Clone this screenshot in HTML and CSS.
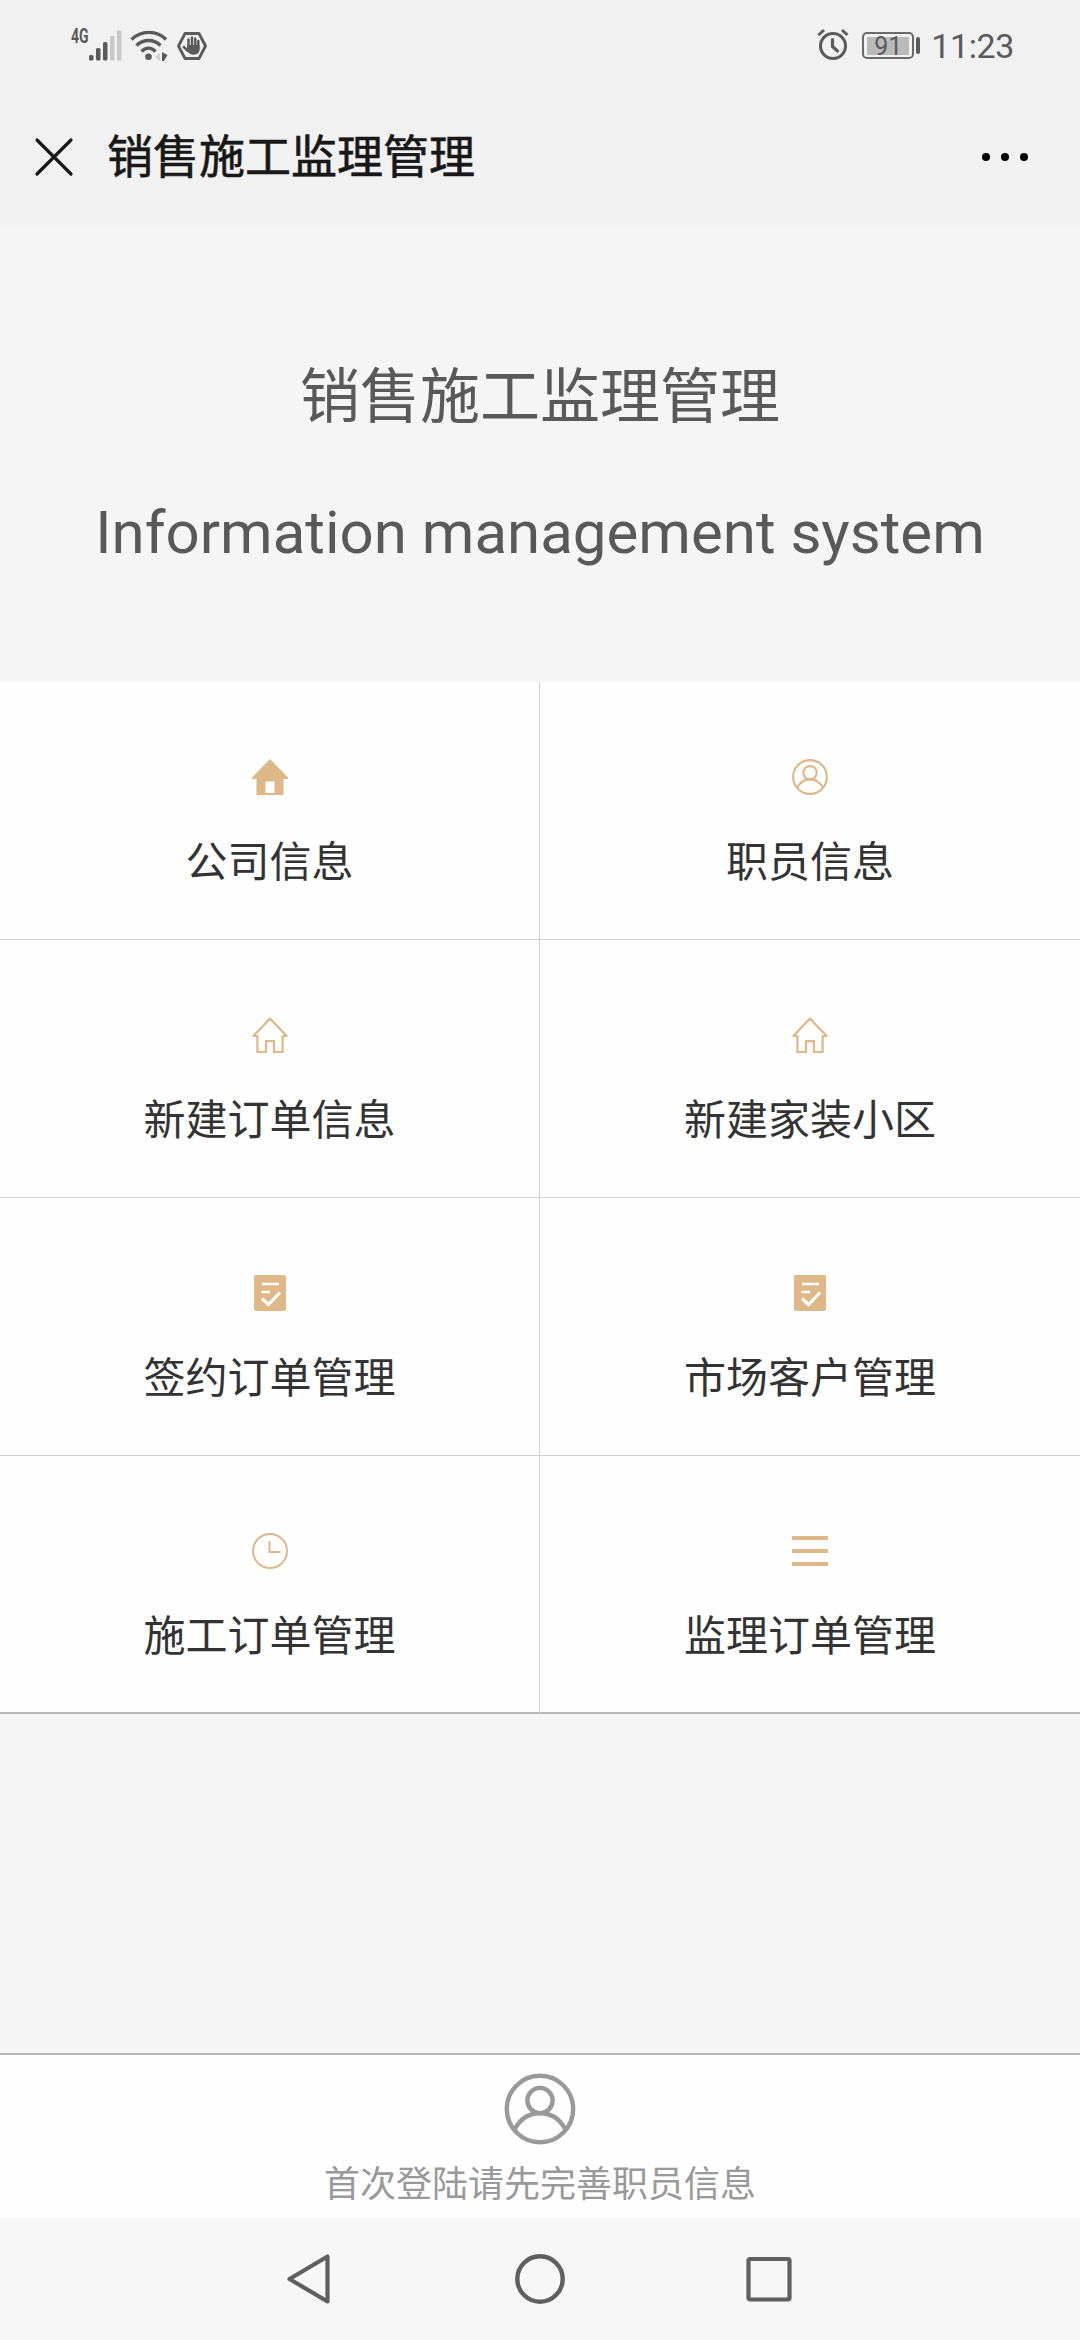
FILE: index.html
```
<!DOCTYPE html>
<html lang="zh-CN">
<head>
    <meta charset="UTF-8">
    <meta name="viewport" content="width=device-width, initial-scale=1.0">
    <title>销售施工监理管理</title>
    <link rel="stylesheet" href="styles.css">
</head>
<body>
    <svg class="sprite" aria-hidden="true">
        <symbol id="icon-user" viewBox="0 0 72 72">
            <g fill="none" stroke="currentColor" stroke-width="4.4">
                <circle cx="36" cy="36" r="33.2"/>
                <circle cx="36" cy="27.5" r="12.6"/>
                <path d="M10.5 56.5C16 46 25 40.2 36 40.2S56 46 61.5 56.5"/>
            </g>
        </symbol>
        <symbol id="icon-house" viewBox="0 0 36 36">
            <path d="M18 1.4L34.6 19H30.6V35H22V24.2H14V35H5.4V19H1.4Z" fill="none" stroke="currentColor" stroke-width="2.2" stroke-linejoin="round"/>
        </symbol>
        <symbol id="icon-form" viewBox="0 0 36 36">
            <rect x="2" y="0" width="32" height="36" rx="2" fill="currentColor"/>
            <path d="M10 9H27M9.500 17H18" fill="none" stroke="#fff" stroke-width="2.400"/>
            <path d="M10 23.500L16.500 29.500L28 17.500" fill="none" stroke="#fff" stroke-width="3.2"/>
        </symbol>
    </svg>

    <div class="status">
        <div class="status-left">
            <span class="net">4G</span>
            <svg class="signal" width="34" height="32" viewBox="0 0 34 32">
                <g fill="#5a5a5a">
                    <rect x="0" y="25" width="4.500" height="5.500" rx="1.500"/>
                    <rect x="7" y="18" width="4.500" height="12.500" rx="1.500"/>
                    <rect x="14" y="12" width="4.500" height="18.500" rx="1.500"/>
                </g>
                <g fill="#c8c8c8">
                    <rect x="21" y="6" width="4.500" height="24.500" rx="1"/>
                    <rect x="28" y="0.500" width="4.500" height="30" rx="1"/>
                </g>
            </svg>
            <svg class="wifi" width="38" height="32" viewBox="0 0 38 32">
                <g fill="none" stroke="#5a5a5a" stroke-width="3.400">
                    <path d="M1.500 9.500C11 0 27 0 36 9.500"/>
                    <path d="M6.500 15.500C13 8.800 24 8.800 30.500 15.500"/>
                    <path d="M11.500 21.500C15.500 17 21.500 17 25.500 21.500"/>
                </g>
                <circle cx="18.500" cy="26.800" r="3.300" fill="#5a5a5a"/>
                <path d="M30 23V31L25 27Z" fill="#d0d0d0"/>
                <path d="M32 22L37.500 25L34 31H32Z" fill="#5a5a5a"/>
            </svg>
            <svg class="hand" width="32" height="30" viewBox="0 0 32 30">
                <path d="M9 2.500H23L29.500 15L23 27.500H9L2.500 15Z" fill="none" stroke="#5a5a5a" stroke-width="2.800" stroke-linejoin="round"/>
                <g fill="none" stroke="#5a5a5a" stroke-width="2.500" stroke-linecap="round">
                    <path d="M12.500 17V8.500M16 16V6.500M19.300 16V7.500M22.300 18V10M7.800 16L11.500 19.500"/>
                </g>
                <path d="M11.300 14H23.500V19C23.500 25 13.500 25 11 20Z" fill="#5a5a5a"/>
            </svg>
        </div>
        <div class="status-right">
            <svg class="alarm" width="32" height="32" viewBox="0 0 32 32">
                <g fill="none" stroke="#5a5a5a" stroke-width="3">
                    <circle cx="16" cy="18" r="12.500"/>
                    <path d="M15.500 11.500V18.500L20.500 23" stroke-width="3.200" stroke-linejoin="round" stroke-linecap="round"/>
                    <path d="M1.500 7L7 2M25 2L30.500 7"/>
                </g>
            </svg>
            <div class="battery"><span class="battery-level">91</span></div>
            <span class="time">11:23</span>
        </div>
    </div>

    <div class="navbar">
        <svg class="close" width="40" height="40" viewBox="0 0 40 40">
            <path d="M3 3L37 37M37 3L3 37" stroke="#181818" stroke-width="3.200" stroke-linecap="round"/>
        </svg>
        <div class="navbar-title">销售施工监理管理</div>
        <div class="more"><i></i><i></i><i></i></div>
    </div>

    <div class="hero">
        <h1>销售施工监理管理</h1>
        <h2>Information management system</h2>
    </div>

    <div class="menu">
        <a class="item">
            <svg class="icon" viewBox="0 0 36 36">
                <path d="M18 0L36 18.500V20H31.500V36H4.500V20H0V18.500ZM13.500 22.500V34H22.500V22.500Z" fill="currentColor" fill-rule="evenodd"/>
            </svg>
            <span>公司信息</span>
        </a>
        <a class="item">
            <svg class="icon" viewBox="0 0 36 36">
                <g fill="none" stroke="currentColor" stroke-width="2.1">
                    <circle cx="18" cy="18" r="16.900"/>
                    <circle cx="18" cy="13.700" r="6.700"/>
                    <path d="M5 28.800C7.800 23.500 12 20.400 18 20.400S28.200 23.500 31 28.800"/>
                </g>
            </svg>
            <span>职员信息</span>
        </a>
        <a class="item">
            <svg class="icon"><use href="#icon-house"/></svg>
            <span>新建订单信息</span>
        </a>
        <a class="item">
            <svg class="icon"><use href="#icon-house"/></svg>
            <span>新建家装小区</span>
        </a>
        <a class="item">
            <svg class="icon"><use href="#icon-form"/></svg>
            <span>签约订单管理</span>
        </a>
        <a class="item">
            <svg class="icon"><use href="#icon-form"/></svg>
            <span>市场客户管理</span>
        </a>
        <a class="item">
            <svg class="icon" viewBox="0 0 36 36">
                <circle cx="18" cy="18" r="17" fill="none" stroke="currentColor" stroke-width="2"/>
                <path d="M17.500 8V19H28.500" fill="none" stroke="currentColor" stroke-width="2"/>
            </svg>
            <span>施工订单管理</span>
        </a>
        <a class="item">
            <svg class="icon" viewBox="0 0 36 36">
                <path d="M0 5H36M0 18H36M0 31H36" stroke="currentColor" stroke-width="3.800"/>
            </svg>
            <span>监理订单管理</span>
        </a>
    </div>

    <div class="footer">
        <svg class="footer-icon"><use href="#icon-user"/></svg>
        <p>首次登陆请先完善职员信息</p>
    </div>

    <div class="sysnav">
        <svg width="50" height="54" viewBox="0 0 50 54">
            <path d="M41.500 4.500V49.500L3.500 27Z" fill="none" stroke="#5f5f5f" stroke-width="4.200" stroke-linejoin="round"/>
        </svg>
        <svg width="50" height="54" viewBox="0 0 50 54">
            <circle cx="25" cy="27" r="22.700" fill="none" stroke="#5f5f5f" stroke-width="4.400"/>
        </svg>
        <svg width="50" height="54" viewBox="0 0 50 54">
            <rect x="4.500" y="7" width="41" height="40.500" rx="1.500" fill="none" stroke="#5f5f5f" stroke-width="4.200"/>
        </svg>
    </div>
</body>
</html>
```
FILE: styles.css
```
* {
    box-sizing: border-box;
}
body {
    margin: 0;
    width: 1080px;
    height: 2340px;
    display: flex;
    flex-direction: column;
    background-color: #f5f5f5;
    font-family: Roboto, "Noto Sans CJK SC", sans-serif;
    overflow: hidden;
}
svg {
    display: block;
    flex: none;
}
.sprite {
    display: none;
}

/* status bar */
.status {
    height: 91px;
    flex: none;
    display: flex;
    justify-content: space-between;
    padding: 0 66px 0 71px;
    background-color: #f1f1f1;
    color: #5a5a5a;
}
.status-left,
.status-right {
    display: flex;
    align-items: center;
}
.net {
    width: 18px;
    margin-bottom: 19px;
    font-size: 20px;
    font-weight: 700;
    line-height: 20px;
    transform: scaleX(0.7);
    transform-origin: left;
}
.signal {
    margin-right: 7px;
}
.wifi {
    margin-right: 8px;
}
.alarm {
    margin: 0 13px 4px 0;
}
.battery {
    position: relative;
    width: 52px;
    height: 27px;
    margin-right: 17px;
    padding: 3px;
    border: 2px solid #6a6a6a;
    border-radius: 5px;
}
.battery::after {
    content: "";
    position: absolute;
    right: -8px;
    top: 3px;
    width: 4px;
    height: 17px;
    border-radius: 2px;
    background-color: #5a5a5a;
}
.battery-level {
    display: block;
    width: 42px;
    height: 18px;
    background-color: #bababa;
    font-size: 25px;
    line-height: 19px;
    text-align: center;
}
.time {
    font-size: 34px;
    line-height: 40px;
    letter-spacing: -0.4px;
}

/* title bar */
.navbar {
    height: 134px;
    flex: none;
    display: flex;
    align-items: center;
    padding: 0 52px 3px 34px;
    background-color: #f1f1f1;
}
.navbar-title {
    margin-left: 33px;
    color: #181818;
    font-size: 46px;
    line-height: 60px;
    -webkit-text-stroke: 0.6px #181818;
}
.more {
    margin-left: auto;
    display: flex;
    gap: 11px;
}
.more i {
    width: 8px;
    height: 8px;
    border-radius: 50%;
    background-color: #000;
}

.hero {
    height: 457px;
    flex: none;
    padding-top: 128px;
    text-align: center;
    color: #595959;
}
.hero h1,
.hero h2 {
    margin: 0;
    font-size: 60px;
    font-weight: 400;
    line-height: 90px;
}
.hero h2 {
    margin-top: 45px;
}

/* menu grid */
.menu {
    flex: none;
    display: grid;
    grid-template-columns: 540px 540px;
    grid-auto-rows: 258px;
    background-color: #fefefe;
}
.item {
    display: flex;
    flex-direction: column;
    align-items: center;
    padding-top: 77px;
    border-bottom: 1px solid #d2d2d2;
    color: #333;
    font-size: 42px;
    line-height: 60px;
}
.item:nth-child(odd) {
    border-right: 1px solid #d2d2d2;
}
.item:nth-last-child(-n+2) {
    border-bottom: 2px solid #b8b8b8;
}
.icon {
    width: 36px;
    height: 36px;
    margin-bottom: 38px;
    color: #deb887;
}

.footer {
    height: 165px;
    flex: none;
    margin-top: auto;
    display: flex;
    flex-direction: column;
    align-items: center;
    padding-top: 18px;
    border-top: 2px solid #b8b8b8;
    background-color: #fefefe;
    color: #999;
}
.footer-icon {
    width: 72px;
    height: 72px;
}
.footer p {
    margin: 15px 0 0;
    font-size: 36px;
    line-height: 50px;
}

/* system buttons */
.sysnav {
    height: 122px;
    flex: none;
    display: flex;
    justify-content: center;
    align-items: center;
    gap: 179px;
    background-color: #f7f7f7;
}
```
